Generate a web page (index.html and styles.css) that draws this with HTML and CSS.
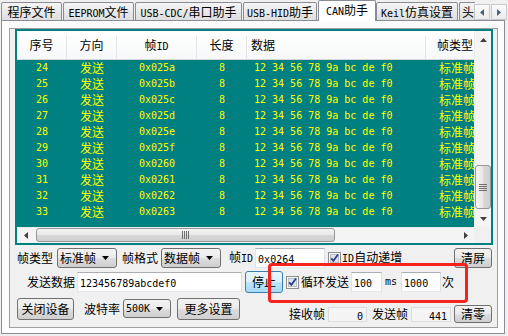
FILE: index.html
```html
<!DOCTYPE html>
<html>
<head>
<meta charset="utf-8">
<title>CAN助手</title>
<link rel="stylesheet" href="styles.css">
</head>
<body>
<div class="tabs">
  <div class="tab t1">程序文件</div>
  <div class="tab t2"><span class="m">EEPROM</span>文件</div>
  <div class="tab t3"><span class="m">USB-CDC/</span>串口助手</div>
  <div class="tab t4"><span class="m">USB-HID</span>助手</div>
  <div class="tab t5 sel"><span class="m">CAN</span>助手</div>
  <div class="tab t6"><span class="m">Keil</span>仿真设置</div>
  <div class="tab t7">头</div>
</div>
<div class="tabnav">
  <span class="navbtn"><svg width="4" height="7" viewBox="0 0 4 7"><path d="M4 0v7L0 3.5z" fill="#4a5f8c"/></svg></span>
  <span class="navbtn"><svg width="4" height="7" viewBox="0 0 4 7"><path d="M0 0v7L4 3.5z" fill="#4a5f8c"/></svg></span>
</div>
<div class="page">
  <div class="frame">
    <div class="list">
      <div class="lv">
        <div class="hdr">
          <div class="c c1">序号</div>
          <div class="c c2">方向</div>
          <div class="c c3">帧<span class="m">ID</span></div>
          <div class="c c4">长度</div>
          <div class="c c5">数据</div>
          <div class="c c6">帧类型</div>
        </div>
        <div class="row"><span class="c c1 m">24</span><span class="c c2">发送</span><span class="c c3 m">0x025a</span><span class="c c4 m">8</span><span class="c c5 m">12 34 56 78 9a bc de f0</span><span class="c c6">标准帧</span></div>
        <div class="row"><span class="c c1 m">25</span><span class="c c2">发送</span><span class="c c3 m">0x025b</span><span class="c c4 m">8</span><span class="c c5 m">12 34 56 78 9a bc de f0</span><span class="c c6">标准帧</span></div>
        <div class="row"><span class="c c1 m">26</span><span class="c c2">发送</span><span class="c c3 m">0x025c</span><span class="c c4 m">8</span><span class="c c5 m">12 34 56 78 9a bc de f0</span><span class="c c6">标准帧</span></div>
        <div class="row"><span class="c c1 m">27</span><span class="c c2">发送</span><span class="c c3 m">0x025d</span><span class="c c4 m">8</span><span class="c c5 m">12 34 56 78 9a bc de f0</span><span class="c c6">标准帧</span></div>
        <div class="row"><span class="c c1 m">28</span><span class="c c2">发送</span><span class="c c3 m">0x025e</span><span class="c c4 m">8</span><span class="c c5 m">12 34 56 78 9a bc de f0</span><span class="c c6">标准帧</span></div>
        <div class="row"><span class="c c1 m">29</span><span class="c c2">发送</span><span class="c c3 m">0x025f</span><span class="c c4 m">8</span><span class="c c5 m">12 34 56 78 9a bc de f0</span><span class="c c6">标准帧</span></div>
        <div class="row"><span class="c c1 m">30</span><span class="c c2">发送</span><span class="c c3 m">0x0260</span><span class="c c4 m">8</span><span class="c c5 m">12 34 56 78 9a bc de f0</span><span class="c c6">标准帧</span></div>
        <div class="row"><span class="c c1 m">31</span><span class="c c2">发送</span><span class="c c3 m">0x0261</span><span class="c c4 m">8</span><span class="c c5 m">12 34 56 78 9a bc de f0</span><span class="c c6">标准帧</span></div>
        <div class="row"><span class="c c1 m">32</span><span class="c c2">发送</span><span class="c c3 m">0x0262</span><span class="c c4 m">8</span><span class="c c5 m">12 34 56 78 9a bc de f0</span><span class="c c6">标准帧</span></div>
        <div class="row"><span class="c c1 m">33</span><span class="c c2">发送</span><span class="c c3 m">0x0263</span><span class="c c4 m">8</span><span class="c c5 m">12 34 56 78 9a bc de f0</span><span class="c c6">标准帧</span></div>
      </div>
      <div class="vs">
        <div class="sbtn"><svg width="7" height="4" viewBox="0 0 7 4"><path d="M0 4h7L3.5 0z" fill="#404040"/></svg></div>
        <div class="vtrack"></div>
        <div class="vthumb"><svg width="8" height="7" viewBox="0 0 8 7"><path d="M0 .5h8M0 2.5h8M0 4.5h8M0 6.5h8" stroke="#6f6f6f"/></svg></div>
        <div class="sbtn"><svg width="7" height="4" viewBox="0 0 7 4"><path d="M0 0h7L3.5 4z" fill="#404040"/></svg></div>
      </div>
      <div class="hs">
        <div class="hbtn"><svg width="4" height="7" viewBox="0 0 4 7"><path d="M4 0v7L0 3.5z" fill="#404040"/></svg></div>
        <div class="hthumb"><svg width="7" height="8" viewBox="0 0 7 8"><path d="M.5 0v8M2.5 0v8M4.5 0v8M6.5 0v8" stroke="#6f6f6f"/></svg></div>
        <div class="htrack"></div>
        <div class="hbtn"><svg width="4" height="7" viewBox="0 0 4 7"><path d="M0 0v7L4 3.5z" fill="#404040"/></svg></div>
      </div>
      <div class="corner"></div>
    </div>

    <div class="ctl">
      <div class="r r1">
        <span class="lbl">帧类型</span>
        <div class="combo w60 ml4"><span>标准帧</span><svg width="7" height="4" viewBox="0 0 7 4"><path d="M0 0h7L3.5 4z" fill="#000"/></svg></div>
        <span class="lbl ml5">帧格式</span>
        <div class="combo w60 ml3"><span>数据帧</span><svg width="7" height="4" viewBox="0 0 7 4"><path d="M0 0h7L3.5 4z" fill="#000"/></svg></div>
        <span class="lbl ml8">帧<span class="m">ID</span></span>
        <div class="inp w70 ml2"><span class="m">0x0264</span></div>
        <svg class="cb ml3" width="13" height="13" viewBox="0 0 13 13"><rect x=".5" y=".5" width="12" height="12" fill="#f6f6f6" stroke="#8e8f8f"/><rect x="2.5" y="2.5" width="8" height="8" fill="#dfe3ea" stroke="#b9bdc5"/><path d="M3.2 6.3l2.2 2.6 4.6-6.4" fill="none" stroke="#2c3f8f" stroke-width="1.8"/></svg>
        <span class="lbl ml1"><span class="m">ID</span>自动递增</span>
        <div class="btn w38 mla">清屏</div>
      </div>
      <div class="r r2">
        <span class="lbl ml10">发送数据</span>
        <div class="inp w165 ml2"><span class="m">123456789abcdef0</span></div>
        <div class="btn hot w38 ml3">停止</div>
        <svg class="cb ml3" width="13" height="13" viewBox="0 0 13 13"><rect x=".5" y=".5" width="12" height="12" fill="#f6f6f6" stroke="#8e8f8f"/><rect x="2.5" y="2.5" width="8" height="8" fill="#dfe3ea" stroke="#b9bdc5"/><path d="M3.2 6.3l2.2 2.6 4.6-6.4" fill="none" stroke="#2c3f8f" stroke-width="1.8"/></svg>
        <span class="lbl ml2">循环发送</span>
        <div class="inp w31 ml2"><span class="m">100</span></div>
        <span class="lbl ml3 m">ms</span>
        <div class="inp w40 ml4"><span class="m">1000</span></div>
        <span class="lbl ml1">次</span>
      </div>
      <div class="r r3">
        <div class="btn big w57">关闭设备</div>
        <span class="lbl ml10 mt">波特率</span>
        <div class="combo small w48 ml3"><span class="m">500K</span><svg width="7" height="4" viewBox="0 0 7 4"><path d="M0 0h7L3.5 4z" fill="#000"/></svg></div>
        <div class="btn big w63 ml6">更多设置</div>
        <div class="stat mla">
          <span class="lbl">接收帧</span>
          <div class="ro w39 ml3"><span class="m">0</span></div>
          <span class="lbl ml5">发送帧</span>
          <div class="ro w40 ml3"><span class="m">441</span></div>
          <div class="btn w38 ml3 h18">清零</div>
        </div>
      </div>
    </div>
  </div>
</div>
<div class="mark"></div>
</body>
</html>
```

FILE: styles.css
```css
* { box-sizing: border-box; margin: 0; padding: 0; }

body {
  width: 508px;
  height: 336px;
  overflow: hidden;
  position: relative;
  background: #f0f0f0;
  color: #000;
  font: 12px/16px "Noto Sans CJK SC", "Noto Sans", sans-serif;
}

.m { font-family: "DejaVu Sans Mono", "Liberation Mono", monospace; font-size: 10px; }

/* ---------- tabs ---------- */
.tabs {
  display: flex;
  align-items: flex-end;
  height: 21px;
  margin-bottom: -1px;
  padding-left: 1px;
  position: relative;
  z-index: 2;
}
.tab {
  height: 19px;
  margin-right: 1px;
  border: 1px solid #898c95;
  border-radius: 2px 2px 0 0;
  background: linear-gradient(#f5f5f5, #e9e9e9 50%, #dedede);
  text-align: center;
  line-height: 17px;
  white-space: nowrap;
  overflow: hidden;
  flex-shrink: 0;
}
.t1 { width: 61px; }
.t2 { width: 71px; }
.t3 { width: 107px; }
.t4 { width: 74px; }
.t5 { width: 58px; margin-right: 0; }
.t6 { width: 82px; }
.t7 { width: 16px; text-align: left; padding-left: 2px; border-right: none; border-radius: 2px 0 0 0; }
.tab.sel {
  height: 21px;
  background: #fff;
  border-bottom: none;
  line-height: 18px;
}

.tabnav {
  position: absolute;
  left: 474px;
  top: 4px;
  display: flex;
  gap: 1px;
  z-index: 3;
}
.navbtn {
  width: 16px;
  height: 16px;
  border: 1px solid #c7c9ce;
  background: linear-gradient(#fbfbfb, #ececec);
  display: flex;
  align-items: center;
  justify-content: center;
}

/* ---------- page & frame ---------- */
.page {
  margin-left: 1px;
  width: 504px;
  height: 314px;
  border: 1px solid #898c95;
  background: #fcfcfc;
  padding: 7px 0 0 7px;
}
.frame {
  width: 489px;
  height: 300px;
  border: 1px solid #a0a0a0;
  background: #f0f0f0;
}

/* ---------- list view ---------- */
.list {
  margin-left: 5px;
  width: 478px;
  height: 216px;
  border: 2px solid #008080;
  display: grid;
  grid-template-columns: 457px 17px;
  grid-template-rows: 196px 16px;
}
.lv {
  background: #008080;
  overflow: hidden;
}
.hdr {
  display: flex;
  height: 29px;
  background: linear-gradient(#ffffff, #f7f8f9);
  border-bottom: 1px solid #d5d5d5;
  padding-top: 5px;
}
.hdr .c {
  border-right: 1px solid #e3e5e8;
  line-height: 18px;
  height: 23px;
}
.row {
  display: flex;
  height: 16px;
  line-height: 16px;
  color: #ffff00;
}
.c { flex-shrink: 0; white-space: pre; overflow: hidden; }
.c1, .c2, .c4 { width: 50px; text-align: center; }
.c3 { width: 80px; text-align: center; }
.c5 { width: 179px; padding-left: 7px; }
.c6 { width: 60px; padding-left: 13px; }
.hdr .c5 { padding-left: 4px; }
.hdr .c6 { padding-left: 11px; }

.vs {
  display: flex;
  flex-direction: column;
  background: #f4f4f4;
  border-left: 1px solid #ececec;
}
.sbtn {
  height: 17px;
  display: flex;
  align-items: center;
  justify-content: center;
  flex-shrink: 0;
}
.vtrack { flex: 1; }
.vthumb {
  height: 44px;
  margin: 0 0 1px 0;
  border: 1px solid #979797;
  border-radius: 3px;
  background: linear-gradient(to right, #f4f4f4, #e8e8e8 50%, #d8d8d8 51%, #cfcfcf);
  display: flex;
  align-items: center;
  justify-content: center;
}

.hs {
  display: flex;
  background: #f4f4f4;
  border-top: 1px solid #ececec;
}
.hbtn {
  width: 17px;
  display: flex;
  align-items: center;
  justify-content: center;
  flex-shrink: 0;
}
.hthumb {
  width: 299px;
  margin: 0 0 1px 2px;
  border: 1px solid #979797;
  border-radius: 3px;
  background: linear-gradient(#f4f4f4, #e8e8e8 50%, #d8d8d8 51%, #cfcfcf);
  display: flex;
  align-items: center;
  justify-content: center;
}
.htrack { flex: 1; }
.corner { background: #f0f0f0; }

/* ---------- controls ---------- */
.ctl { padding: 0 5px 0 7px; }
.r { display: flex; align-items: center; }
.r1 { height: 20px; margin-top: 3px; }
.r2 { height: 22px; margin-top: 3px; }
.r3 { height: 25px; margin-top: 5px; align-items: flex-start; }
.r3 .mt { margin-top: 3px; }
.lbl { white-space: nowrap; flex-shrink: 0; }

.combo {
  height: 20px;
  border: 1px solid #707070;
  border-radius: 3px;
  background: linear-gradient(#f3f3f3, #ebebeb 50%, #dddddd 51%, #cfcfcf);
  display: flex;
  align-items: center;
  justify-content: space-between;
  padding: 0 7px 0 2px;
  flex-shrink: 0;
}
.combo.small { height: 19px; margin-top: 1px; }
.inp {
  height: 20px;
  border: 1px solid #abadb3;
  border-color: #abadb3 #dbdfe6 #e3e9ef #e2e3ea;
  background: #fff;
  padding-left: 2px;
  line-height: 18px;
  flex-shrink: 0;
}
.ro {
  height: 15px;
  border: 1px solid #dcdcdc;
  background: #f4f4f4;
  text-align: right;
  padding-right: 3px;
  line-height: 13px;
  flex-shrink: 0;
}
.btn {
  height: 20px;
  border: 1px solid #707070;
  border-radius: 3px;
  background: linear-gradient(#f2f2f2, #ebebeb 50%, #dddddd 51%, #cfcfcf);
  text-align: center;
  line-height: 18px;
  flex-shrink: 0;
}
.btn.big { height: 22px; line-height: 20px; }
.btn.h18 { height: 18px; line-height: 16px; }
.btn.hot {
  height: 22px;
  line-height: 20px;
  border-color: #3c7fb1;
  background: linear-gradient(#eaf6fd, #d9f0fc 50%, #bee6fd 51%, #a7d9f5);
}
.cb { flex-shrink: 0; display: block; }
.stat { display: flex; align-items: center; height: 18px; margin-top: 7px; }

.w31 { width: 31px; } .w38 { width: 38px; } .w39 { width: 39px; } .w40 { width: 40px; }
.w48 { width: 48px; } .w57 { width: 57px; } .w60 { width: 60px; } .w63 { width: 63px; }
.w70 { width: 70px; } .w165 { width: 165px; }
.ml1 { margin-left: 1px; } .ml2 { margin-left: 2px; } .ml3 { margin-left: 3px; }
.ml4 { margin-left: 4px; } .ml5 { margin-left: 5px; } .ml6 { margin-left: 6px; }
.ml8 { margin-left: 8px; } .ml10 { margin-left: 10px; } .mla { margin-left: auto; }

/* ---------- red annotation ---------- */
.mark {
  position: absolute;
  left: 268px;
  top: 263px;
  width: 200px;
  height: 40px;
  border: 3px solid #f5231c;
  border-radius: 4px;
  z-index: 5;
}
```
